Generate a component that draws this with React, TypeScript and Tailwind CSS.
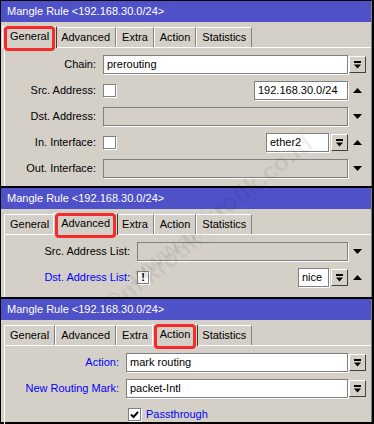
import type { ReactNode } from 'react';

const TITLE = 'Mangle Rule <192.168.30.0/24>';
const TABS = ['General', 'Advanced', 'Extra', 'Action', 'Statistics'];

function DropButton() {
  return (
    <div className="w-[17px] h-[17px] shrink-0 bg-[#d4d0c8] border border-t-white border-l-white border-r-[#404040] border-b-[#404040] flex items-center justify-center">
      <svg width="9" height="8" viewBox="0 0 9 8" fill="black">
        <rect x="1" y="0" width="7" height="2" />
        <path d="M1 3.5h7L4.5 7.5z" />
      </svg>
    </div>
  );
}

function Arrow({ up }: { up?: boolean }) {
  return (
    <svg width="9" height="5" viewBox="0 0 9 5" fill="black" className="ml-[5px]">
      {up ? <path d="M0 5L4.5 0L9 5z" /> : <path d="M0 0h9L4.5 5z" />}
    </svg>
  );
}

function Field({ value, disabled, className = 'flex-1' }: { value?: string; disabled?: boolean; className?: string }) {
  return (
    <div
      className={`${className} h-full border border-[#808080] shadow-[1px_1px_0_#fff] px-[3px] flex items-center ${
        disabled ? 'bg-[#d4d0c8]' : 'bg-white'
      }`}
    >
      {value}
    </div>
  );
}

function Check({ checked }: { checked?: boolean }) {
  return (
    <div className="w-[13px] h-[13px] shrink-0 bg-white border border-[#808080] shadow-[1px_1px_0_#fff] flex items-center justify-center">
      {checked && (
        <svg width="9" height="8" viewBox="0 0 9 8">
          <path d="M1 3.5l2.5 2.5L8 1" stroke="black" strokeWidth="2" fill="none" />
        </svg>
      )}
    </div>
  );
}

function Row({ label, lw, blue, field, right }: { label?: string; lw: string; blue?: boolean; field: ReactNode; right?: ReactNode }) {
  return (
    <div className="flex items-center h-[19px]">
      <div className={`${lw} shrink-0 text-right pr-[7px] ${blue ? 'text-[#0000ff]' : 'text-black'}`}>{label}</div>
      <div className="flex-1 h-full flex items-center">{field}</div>
      <div className="w-[23px] shrink-0 h-full flex items-center">{right}</div>
    </div>
  );
}

function Window({ active, height, children }: { active: number; height: string; children: ReactNode }) {
  return (
    <div className={`${height} bg-[#d4d0c8] border-r border-[#808080] flex flex-col`}>
      <div className="h-[21px] shrink-0 bg-[#4f51c9] text-white pl-[6px] flex items-center">{TITLE}</div>
      <div className="h-[25px] shrink-0 pt-[3px] pl-[3px] flex items-end relative z-10">
        {TABS.map((t, i) =>
          i === active ? (
            <div
              key={t}
              className="relative h-[22px] -mx-[2px] -mb-px px-[7px] pb-[2px] bg-[#d4d0c8] border-t border-l border-white border-r border-r-[#404040] flex items-center"
            >
              {t}
              <span className="absolute left-px right-px -top-px -bottom-[3px] border-[3px] border-[#f52b2b] rounded-[4px]"></span>
            </div>
          ) : (
            <div
              key={t}
              className="h-[20px] px-[5px] bg-[#d4d0c8] border-t border-l border-white border-r border-r-[#808080] flex items-center"
            >
              {t}
            </div>
          )
        )}
      </div>
      <div className="flex-1 ml-[3px] border-t border-l border-white pt-[7px] flex flex-col gap-[7px]">{children}</div>
    </div>
  );
}

export default function App() {
  return (
    <div className="relative w-[374px] h-[424px] overflow-hidden bg-black pl-px pt-px pr-[2px] pb-[2px] flex flex-col gap-[2px] text-[11px] font-['Liberation_Sans',Arial,sans-serif] leading-none">
      {/* General */}
      <Window active={0} height="h-[185px]">
        <Row lw="w-[98px]" label="Chain:" field={<Field value="prerouting" />} right={<div className="ml-px"><DropButton /></div>} />
        <Row
          lw="w-[98px]"
          label="Src. Address:"
          field={
            <div className="flex-1 h-full flex items-center justify-between">
              <Check />
              <Field value="192.168.30.0/24" className="w-[94px]" />
            </div>
          }
          right={<Arrow up />}
        />
        <Row lw="w-[98px]" label="Dst. Address:" field={<Field disabled />} right={<Arrow />} />
        <Row
          lw="w-[98px]"
          label="In. Interface:"
          field={
            <div className="flex-1 h-full flex items-center">
              <Check />
              <div className="flex-1"></div>
              <Field value="ether2" className="w-[63px]" />
              <div className="ml-[2px]"><DropButton /></div>
            </div>
          }
          right={<Arrow up />}
        />
        <Row lw="w-[98px]" label="Out. Interface:" field={<Field disabled />} right={<Arrow />} />
      </Window>

      {/* Advanced */}
      <Window active={1} height="h-[109px]">
        <Row lw="w-[132px]" label="Src. Address List:" field={<Field disabled />} right={<Arrow />} />
        <Row
          lw="w-[132px]"
          blue
          label="Dst. Address List:"
          field={
            <div className="flex-1 h-full flex items-center">
              <div className="w-[12px] h-[13px] bg-white border border-[#808080] shadow-[1px_1px_0_#fff] flex items-center justify-center font-bold text-black">!</div>
              <div className="flex-1"></div>
              <Field value="nice" className="w-[31px]" />
              <div className="ml-[2px]"><DropButton /></div>
            </div>
          }
          right={<Arrow up />}
        />
      </Window>

      {/* Action */}
      <Window active={3} height="h-[123px]">
        <Row lw="w-[121px]" blue label="Action:" field={<Field value="mark routing" />} right={<div className="ml-px"><DropButton /></div>} />
        <Row lw="w-[121px]" blue label="New Routing Mark:" field={<Field value="packet-Intl" />} right={<div className="ml-px"><DropButton /></div>} />
        <Row
          lw="w-[121px]"
          field={
            <div className="flex items-center gap-[5px] ml-[2px] text-[#0000ff]">
              <Check checked />
              Passthrough
            </div>
          }
        />
      </Window>

      {/* watermark */}
      <span className="pointer-events-none absolute left-[220px] top-[210px] -translate-x-1/2 -translate-y-1/2 -rotate-[38deg] whitespace-nowrap font-bold text-[25px] text-black/[0.06]">
        www.mikrotik.co.id
      </span>
      <span className="pointer-events-none absolute left-[165px] top-[262px] -translate-x-1/2 -translate-y-1/2 -rotate-[38deg] whitespace-nowrap font-bold text-[25px] text-black/[0.06]">
        @mikrotik_id
      </span>
    </div>
  );
}
